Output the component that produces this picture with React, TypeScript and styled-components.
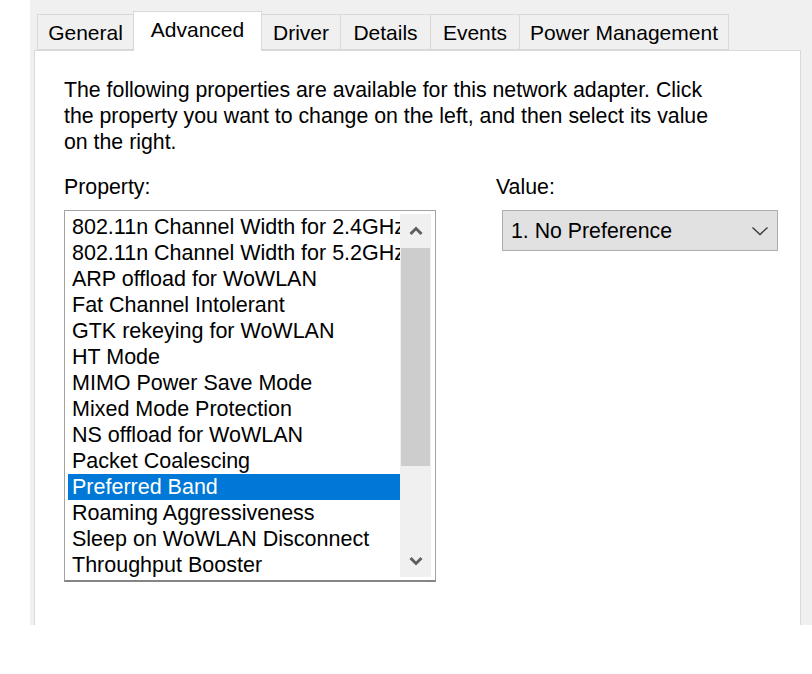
import React from "react";
import styled, { createGlobalStyle } from "styled-components";

const GlobalStyle = createGlobalStyle`
  body {
    margin: 0;
    background: #ffffff;
    font-family: "Liberation Sans", Arial, sans-serif;
    color: #000000;
  }
`;

const Page = styled.div`
  margin-left: 30px;
  height: 625px;
  overflow: hidden;
  background: #f0f0f0;
  padding: 11px 11px 0 4px;
  box-sizing: border-box;
  display: flex;
  flex-direction: column;
`;

const TabRow = styled.div`
  display: flex;
  align-items: flex-end;
  padding-left: 3px;
  position: relative;
  z-index: 1;
`;

const Tab = styled.div<{ $w: number; $active?: boolean }>`
  width: ${(p) => p.$w}px;
  height: ${(p) => (p.$active ? 40 : 36)}px;
  margin-bottom: ${(p) => (p.$active ? -1 : 0)}px;
  margin-left: -1px;
  box-sizing: border-box;
  border: 1px solid #d9d9d9;
  border-bottom: ${(p) => (p.$active ? "none" : "1px solid #d9d9d9")};
  background: ${(p) => (p.$active ? "#ffffff" : "#f0f0f0")};
  padding-top: 5px;
  font-size: 21px;
  line-height: 26px;
  text-align: center;
  white-space: nowrap;

  &:first-child {
    margin-left: 0;
  }
`;

const Panel = styled.div`
  flex: 1;
  background: #ffffff;
  border: 1px solid #d9d9d9;
  border-bottom: none;
  padding: 26px 29px 0 29px;
  font-size: 21.3px;
  line-height: 26px;
`;

const Intro = styled.p`
  margin: 0;
`;

const Columns = styled.div`
  display: grid;
  grid-template-columns: 372px 1fr;
  column-gap: 60px;
  margin-top: 19px;
`;

const Column = styled.div`
  display: flex;
  flex-direction: column;
`;

const FieldLabel = styled.div`
  margin-bottom: 10px;
`;

const ListBox = styled.div`
  height: 372px;
  box-sizing: border-box;
  border: 1px solid #a3a3a3;
  border-bottom: 2px solid #858585;
  padding: 3px;
  display: flex;
`;

const Items = styled.div`
  width: 332px;
  overflow: hidden;
`;

const Item = styled.div<{ $selected?: boolean }>`
  height: 26px;
  line-height: 26px;
  padding-left: 4px;
  white-space: nowrap;
  overflow: hidden;
  font-size: 21.5px;
  background: ${(p) => (p.$selected ? "#0078d7" : "transparent")};
  color: ${(p) => (p.$selected ? "#ffffff" : "#000000")};
`;

const ScrollBar = styled.div`
  width: 31px;
  background: #f0f0f0;
  display: flex;
  flex-direction: column;
`;

const ScrollButton = styled.div`
  height: 33px;
  display: flex;
  align-items: center;
  justify-content: center;
`;

const Thumb = styled.div`
  height: 218px;
  margin: 1px 1px 0 1px;
  background: #cdcdcd;
`;

const Track = styled.div`
  flex: 1;
`;

const Dropdown = styled.div`
  margin-left: 6px;
  width: 276px;
  height: 41px;
  box-sizing: border-box;
  border: 1px solid #adadad;
  background: #e1e1e1;
  display: flex;
  align-items: center;
  justify-content: space-between;
  padding: 0 8px 0 8px;
`;

const properties = [
  "802.11n Channel Width for 2.4GHz",
  "802.11n Channel Width for 5.2GHz",
  "ARP offload for WoWLAN",
  "Fat Channel Intolerant",
  "GTK rekeying for WoWLAN",
  "HT Mode",
  "MIMO Power Save Mode",
  "Mixed Mode Protection",
  "NS offload for WoWLAN",
  "Packet Coalescing",
  "Preferred Band",
  "Roaming Aggressiveness",
  "Sleep on WoWLAN Disconnect",
  "Throughput Booster",
];

const tabs = [
  { label: "General", w: 97 },
  { label: "Advanced", w: 129, active: true },
  { label: "Driver", w: 80 },
  { label: "Details", w: 91 },
  { label: "Events", w: 90 },
  { label: "Power Management", w: 210 },
];

function Caret({ up }: { up?: boolean }) {
  return (
    <svg width="16" height="10" viewBox="0 0 16 10">
      <polyline
        points={up ? "2.5,8 8,2.5 13.5,8" : "2.5,2 8,7.5 13.5,2"}
        fill="none"
        stroke="#606060"
        strokeWidth="3"
      />
    </svg>
  );
}

function App() {
  return (
    <>
      <GlobalStyle />
      <Page>
        <TabRow>
          {tabs.map((t) => (
            <Tab key={t.label} $w={t.w} $active={t.active}>
              {t.label}
            </Tab>
          ))}
        </TabRow>
        <Panel>
          <Intro>
            The following properties are available for this network adapter. Click
            <br />
            the property you want to change on the left, and then select its value
            <br />
            on the right.
          </Intro>
          <Columns>
            <Column>
              <FieldLabel>Property:</FieldLabel>
              <ListBox>
                <Items>
                  {properties.map((name) => (
                    <Item key={name} $selected={name === "Preferred Band"}>
                      {name}
                    </Item>
                  ))}
                </Items>
                <ScrollBar>
                  <ScrollButton>
                    <Caret up />
                  </ScrollButton>
                  <Thumb />
                  <Track />
                  <ScrollButton>
                    <Caret />
                  </ScrollButton>
                </ScrollBar>
              </ListBox>
            </Column>
            <Column>
              <FieldLabel>Value:</FieldLabel>
              <Dropdown>
                <span>1. No Preference</span>
                <svg width="18" height="10" viewBox="0 0 18 10">
                  <polyline
                    points="1.5,1.5 9,8.5 16.5,1.5"
                    fill="none"
                    stroke="#3c3c3c"
                    strokeWidth="1.4"
                  />
                </svg>
              </Dropdown>
            </Column>
          </Columns>
        </Panel>
      </Page>
    </>
  );
}

export default App;
